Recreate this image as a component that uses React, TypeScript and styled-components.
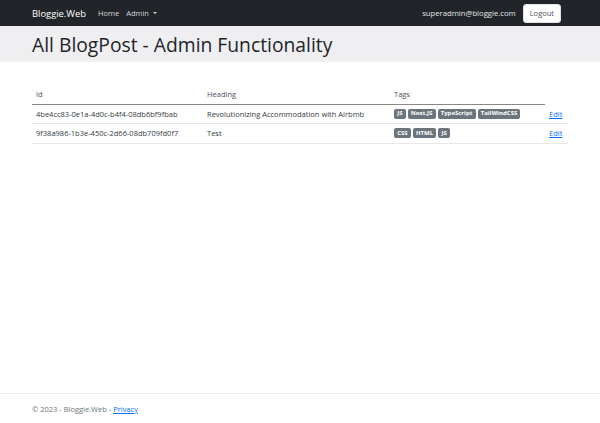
import React from "react";
import styled, { createGlobalStyle } from "styled-components";

const Global = createGlobalStyle`
  html, body { margin: 0; padding: 0; }
  body {
    font-family: "Open Sans", "Noto Sans", sans-serif;
    font-size: 8px;
    color: #212529;
    background: #fff;
  }
  * { box-sizing: border-box; }
`;

const Page = styled.div`
  min-height: 100vh;
  display: flex;
  flex-direction: column;
`;

const NavBar = styled.nav`
  height: 26px;
  background: #212529;
  display: flex;
  align-items: center;
  padding: 0 39px 0 32px;
`;

const Brand = styled.span`
  color: #fff;
  font-size: 9.4px;
  margin-right: 12px;
`;

const NavLink = styled.span`
  color: rgba(255, 255, 255, 0.82);
  font-size: 7.5px;
  margin-right: 7px;
  display: flex;
  align-items: center;
`;

const Caret = styled.span`
  display: inline-block;
  margin-left: 4px;
  border-top: 2.5px solid rgba(255, 255, 255, 0.82);
  border-left: 2.5px solid transparent;
  border-right: 2.5px solid transparent;
`;

const Spacer = styled.div`
  flex: 1;
`;

const UserEmail = styled.span`
  color: #e2e3e5;
  font-size: 7.7px;
  margin-right: 7px;
`;

const LogoutButton = styled.button`
  background: #fff;
  border: 1px solid #dee2e6;
  border-radius: 3px;
  color: #495057;
  font-family: inherit;
  font-size: 7.5px;
  height: 19px;
  padding: 0 6px;
`;

const HeaderBand = styled.div`
  background: #efeff1;
  height: 36px;
  display: flex;
  align-items: center;
  padding: 0 32px;
`;

const Title = styled.h1`
  margin: 0;
  font-size: 19.3px;
  font-weight: 500;
  color: #212529;
`;

const Main = styled.main`
  flex: 1;
  padding: 23px 32px 0;
`;

const Table = styled.table`
  width: 536px;
  border-collapse: collapse;
  table-layout: fixed;
`;

const Th = styled.th`
  text-align: left;
  font-weight: 400;
  color: #495057;
  font-size: 7.5px;
  height: 19px;
  padding: 0 4px;
  border-bottom: 1.5px solid #888;
`;

const Td = styled.td`
  font-size: 7.5px;
  height: 19.5px;
  padding: 0 4px;
  color: #343a40;
  border-bottom: 1px solid #e6e8ea;
  vertical-align: middle;
`;

const Badges = styled.div`
  display: flex;
  gap: 2px;
`;

const Badge = styled.span`
  background: #6c757d;
  color: #fff;
  font-weight: 700;
  font-size: 6px;
  padding: 1.8px 3.2px;
  border-radius: 2px;
  line-height: 1.1;
`;

const Link = styled.a`
  color: #0d6efd;
  text-decoration: underline;
`;

const Footer = styled.footer`
  border-top: 1px solid #e9ecef;
  height: 30px;
  display: flex;
  align-items: center;
  padding: 0 32px;
  color: #6c757d;
  font-size: 7.5px;
`;

const rows = [
  {
    id: "4be4cc83-0e1a-4d0c-b4f4-08db6bf9fbab",
    heading: "Revolutionizing Accommodation with Airbmb",
    tags: ["JS", "Next.JS", "TypeScript", "TailWindCSS"],
  },
  {
    id: "9f38a986-1b3e-450c-2d66-08db709fd0f7",
    heading: "Test",
    tags: ["CSS", "HTML", "JS"],
  },
];

export default function App() {
  return (
    <Page>
      <Global />
      <NavBar>
        <Brand>Bloggie.Web</Brand>
        <NavLink>Home</NavLink>
        <NavLink>
          Admin <Caret />
        </NavLink>
        <Spacer />
        <UserEmail>superadmin@bloggie.com</UserEmail>
        <LogoutButton>Logout</LogoutButton>
      </NavBar>
      <HeaderBand>
        <Title>All BlogPost - Admin Functionality</Title>
      </HeaderBand>
      <Main>
        <Table>
          <colgroup>
            <col style={{ width: 171 }} />
            <col style={{ width: 187 }} />
            <col style={{ width: 155 }} />
            <col style={{ width: 23 }} />
          </colgroup>
          <thead>
            <tr>
              <Th>Id</Th>
              <Th>Heading</Th>
              <Th>Tags</Th>
            </tr>
          </thead>
          <tbody>
            {rows.map((r) => (
              <tr key={r.id}>
                <Td>{r.id}</Td>
                <Td>{r.heading}</Td>
                <Td>
                  <Badges>
                    {r.tags.map((t) => (
                      <Badge key={t}>{t}</Badge>
                    ))}
                  </Badges>
                </Td>
                <Td>
                  <Link href="#">Edit</Link>
                </Td>
              </tr>
            ))}
          </tbody>
        </Table>
      </Main>
      <Footer>
        © 2023 - Bloggie.Web -&nbsp;<Link href="#">Privacy</Link>
      </Footer>
    </Page>
  );
}
